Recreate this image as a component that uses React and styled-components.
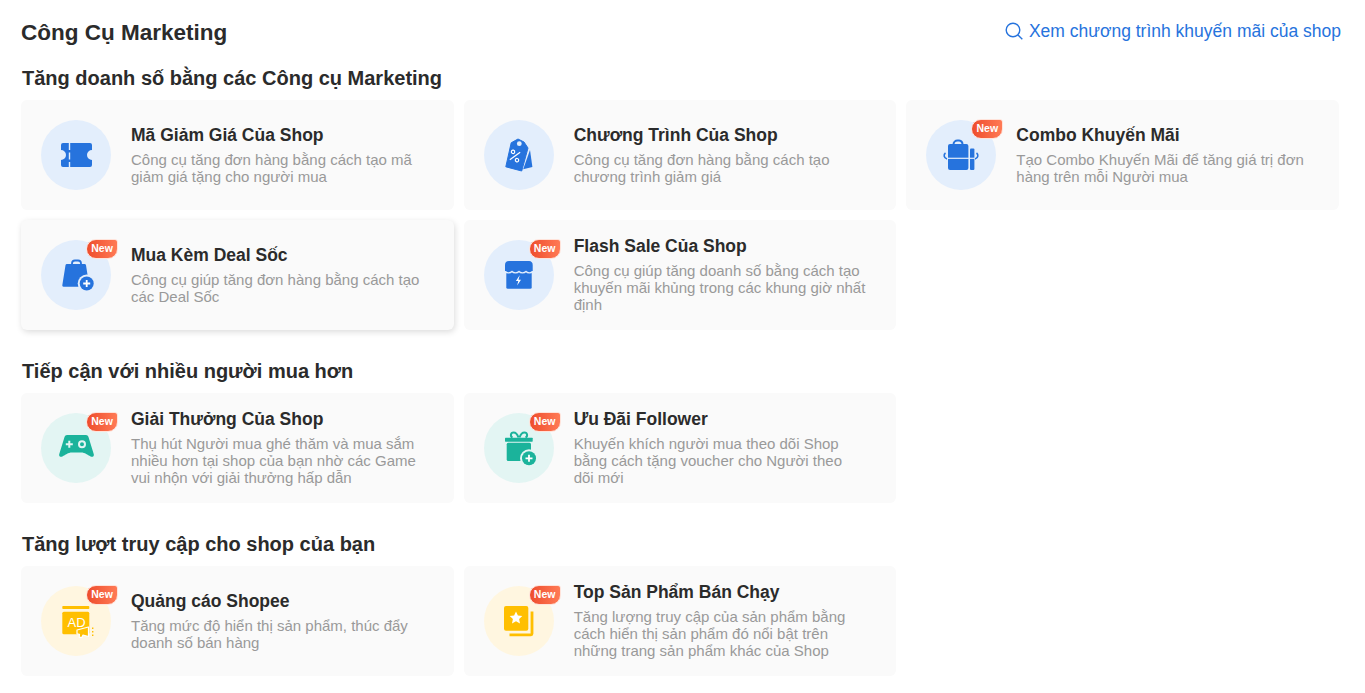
import styled, { createGlobalStyle } from "styled-components";

const GlobalStyle = createGlobalStyle`
  html, body {
    margin: 0;
    padding: 0;
    background: #fff;
    font-family: "Liberation Sans", Arial, sans-serif;
  }
  * {
    box-sizing: border-box;
  }
`;

const palette = {
  blue: { bg: "#e3eefc", fg: "#2673dd" },
  teal: { bg: "#e3f5f3", fg: "#1bb39b" },
  yellow: { bg: "#fff6e0", fg: "#ffbf00" },
};

const Page = styled.div`
  padding: 0 26px 0 21px;
  width: 1365px;
  height: 693px;
  overflow: hidden;
`;

const Header = styled.header`
  display: flex;
  align-items: center;
  justify-content: space-between;
  height: 66px;
  margin-right: -2px;
`;

const PageTitle = styled.h1`
  margin: 0;
  font-size: 22.5px;
  font-weight: 700;
  line-height: 28px;
  color: #2b2b2b;
`;

const ShopLink = styled.a`
  display: flex;
  align-items: center;
  gap: 6px;
  margin-bottom: 4px;
  font-size: 17.5px;
  line-height: 24px;
  color: #2673dd;
  cursor: pointer;
`;

const Section = styled.section`
  & + & {
    margin-top: 29px;
  }
`;

const SectionTitle = styled.h2`
  margin: 0 0 10px 1px;
  font-size: 20px;
  font-weight: 700;
  line-height: 24px;
  color: #2b2b2b;
`;

const Grid = styled.div`
  display: grid;
  grid-template-columns: repeat(3, 1fr);
  gap: 10px;
`;

const Card = styled.div`
  display: flex;
  align-items: center;
  height: 110px;
  padding: 0 30.5px 0 20px;
  background: #fafafa;
  border-radius: 6px;
  cursor: pointer;
  box-shadow: ${(p) => (p.$hover ? "1px 2px 6px rgba(0, 0, 0, 0.14)" : "none")};
`;

const IconCircle = styled.div`
  position: relative;
  flex: none;
  width: 70px;
  height: 70px;
  margin-right: 20px;
  border-radius: 50%;
  background: ${(p) => palette[p.$tone].bg};
  color: ${(p) => palette[p.$tone].fg};

  svg {
    display: block;
  }
`;

const NewBadge = styled.span`
  position: absolute;
  top: -1px;
  left: 45px;
  width: 32px;
  height: 20px;
  border: 1px solid #ffe3da;
  border-radius: 10px 3px 10px 10px;
  background: linear-gradient(90deg, #ee4d2d, #ff7a55);
  color: #fff;
  font-size: 10.5px;
  font-weight: 700;
  line-height: 17px;
  text-align: center;
`;

const CardBody = styled.div`
  min-width: 0;
  margin-bottom: 3px;
`;

const CardTitle = styled.div`
  font-size: 17.5px;
  font-weight: 700;
  line-height: 24px;
  color: #2b2b2b;
`;

const CardDesc = styled.div`
  margin-top: 4px;
  font-size: 15px;
  line-height: 17px;
  color: #999;
`;

const Glyph = ({ children }) => (
  <svg width="70" height="70" viewBox="0 0 70 70" fill="currentColor">
    {children}
  </svg>
);

const PlusDot = ({ cx, cy, ring }) => (
  <>
    <circle cx={cx} cy={cy} r="9" fill={ring} />
    <circle cx={cx} cy={cy} r="7" fill="currentColor" />
    <path d={`M${cx - 3.5} ${cy}h7M${cx} ${cy - 3.5}v7`} stroke="#fff" strokeWidth="1.8" />
  </>
);

const TicketIcon = () => (
  <Glyph>
    <path d="M22 23h27a2 2 0 0 1 2 2v5a5 5 0 0 0 0 10v5a2 2 0 0 1-2 2H22a2 2 0 0 1-2-2v-5a5 5 0 0 0 0-10v-5a2 2 0 0 1 2-2z" />
    <path d="M28.5 23v24" stroke="#e3eefc" strokeWidth="1.4" strokeDasharray="7 2.5" />
  </Glyph>
);

const TagIcon = () => (
  <Glyph>
    <path d="M46 30l2.4 17-9.2 2.2z" />
    <path d="M34 19l6 3 4 6-6.3 23-15.9-4.2 5.4-24z" strokeLinejoin="round" stroke="currentColor" strokeWidth="1" />
    <circle cx="35.3" cy="23.7" r="2.4" fill="#e3eefc" />
    <g transform="rotate(15 31 36)" stroke="#fff" strokeWidth="1.2" fill="none">
      <path d="M35 31l-8 10" />
      <circle cx="28" cy="32.5" r="1.7" />
      <circle cx="34" cy="39.5" r="1.7" />
    </g>
  </Glyph>
);

const ComboIcon = () => (
  <Glyph>
    <path d="M27.5 25v-.5a4 4 0 0 1 4-4h1.500a4 4 0 0 1 3.500 4v.5" fill="none" stroke="currentColor" strokeWidth="2" />
    <rect x="22" y="24" width="20.4" height="26" rx="2" />
    <rect x="44" y="28.4" width="4.4" height="21.6" rx="1" />
    <path d="M21 38.3h28" stroke="#e3eefc" strokeWidth="1.2" />
    <path d="M19.5 33c-2 1.5-2 5 1.5 6M50.5 33c2 1.5 2 5-1.5 6" fill="none" stroke="currentColor" strokeWidth="1.6" />
  </Glyph>
);

const DealIcon = () => (
  <Glyph>
    <path d="M31 25v-1.500a3 3 0 0 1 3-3h3a3 3 0 0 1 3 3V25" fill="none" stroke="currentColor" strokeWidth="1.8" />
    <path d="M26 24h17.500a1.500 1.500 0 0 1 1.500 1.300l3.200 20a1.200 1.200 0 0 1-1.200 1.400H22.500a1.200 1.200 0 0 1-1.200-1.400l3.200-20a1.500 1.500 0 0 1 1.500-1.300z" />
    <PlusDot cx={45.7} cy={43.5} ring="#e3eefc" />
  </Glyph>
);

const StoreIcon = () => (
  <Glyph>
    <rect x="22.3" y="28" width="25.4" height="20.7" rx="1.5" />
    <path d="M25 21h20a4 4 0 0 1 3.700 4v6H21v-6a4 4 0 0 1 4-4z" />
    <path d="M21 31.500c1.700 1.800 5.200 1.800 7 0 1.700 1.800 5.200 1.800 7 0 1.700 1.800 5.200 1.800 7 0 1.700 1.800 5 1.800 6.700 0" fill="none" stroke="#e3eefc" strokeWidth="1.300" />
    <path d="M35.500 35.500l-3.600 5.500h2.400l-1.200 4.600 3.900-5.900h-2.500l1.200-4.200z" fill="#fff" />
  </Glyph>
);

const GamepadIcon = () => (
  <Glyph>
    <path d="M26 22h19a2.500 2.500 0 0 1 2.400 1.800l5.400 17.400c.6 2-1.400 3.200-3.200 2.400-3.200-1.600-5.400-4-9.600-4h-9c-4.200 0-6.400 2.400-9.600 4-1.800.8-3.800-.4-3.200-2.400l5.400-17.400A2.500 2.500 0 0 1 26 22z" />
    <path d="M24.800 31.300h7M28.300 27.800v7" stroke="#e3f5f3" strokeWidth="2" />
    <circle cx="41" cy="31.300" r="3" fill="none" stroke="#e3f5f3" strokeWidth="2" />
  </Glyph>
);

const GiftIcon = () => (
  <Glyph>
    <path d="M34.500 24.500c-1-3-3-5-5-5-3 0-3.500 4-1 5M35.500 24.500c1-3 3-5 5-5 3 0 3.500 4 1 5" fill="none" stroke="currentColor" strokeWidth="2" />
    <rect x="21" y="24.700" width="27.700" height="4" rx=".6" />
    <rect x="22.700" y="29.800" width="24.300" height="18.300" rx="1.500" />
    <PlusDot cx={45} cy={45.300} ring="#e3f5f3" />
  </Glyph>
);

const AdIcon = () => (
  <Glyph>
    <rect x="21.300" y="20" width="27" height="3" rx=".8" />
    <rect x="21.300" y="25.700" width="27" height="22.500" rx="1.500" />
    <text x="26.500" y="40.700" fontFamily="'Liberation Sans', sans-serif" fontSize="13" fill="#fff">AD</text>
    <path d="M36 44l11.500-3v9.500l-5.500-1.500-1 2.300h-2.800l.3-3-2.500-.5z" stroke="#fff" strokeWidth="1.200" strokeLinejoin="round" />
    <path d="M51.700 41.500v1.500M51.700 45v1.500M51.700 48.500V50" stroke="currentColor" strokeWidth="1.400" />
  </Glyph>
);

const TopIcon = () => (
  <Glyph>
    <path d="M48 25.500v22.300a1 1 0 0 1-1 1H25.500" fill="none" stroke="currentColor" strokeWidth="2.800" />
    <rect x="20" y="20" width="24.300" height="24.700" rx="2" />
    <path d="M32 25.500l1.900 4 4.400.5-3.200 3 .9 4.400-4-2.200-4 2.200.9-4.400-3.200-3 4.400-.5z" fill="#fff" />
  </Glyph>
);

const SearchIcon = () => (
  <svg width="18" height="18" viewBox="0 0 18 18" fill="none" stroke="currentColor" strokeWidth="1.400">
    <circle cx="8" cy="8" r="6.800" />
    <path d="M13 13l4.300 4.300" />
  </svg>
);

const sections = [
  {
    title: "Tăng doanh số bằng các Công cụ Marketing",
    tools: [
      { name: "Mã Giảm Giá Của Shop", desc: "Công cụ tăng đơn hàng bằng cách tạo mã giảm giá tặng cho người mua", tone: "blue", Icon: TicketIcon },
      { name: "Chương Trình Của Shop", desc: "Công cụ tăng đơn hàng bằng cách tạo chương trình giảm giá", tone: "blue", Icon: TagIcon },
      { name: "Combo Khuyến Mãi", desc: "Tạo Combo Khuyến Mãi để tăng giá trị đơn hàng trên mỗi Người mua", tone: "blue", Icon: ComboIcon, isNew: true },
      { name: "Mua Kèm Deal Sốc", desc: "Công cụ giúp tăng đơn hàng bằng cách tạo các Deal Sốc", tone: "blue", Icon: DealIcon, isNew: true, hover: true },
      { name: "Flash Sale Của Shop", desc: "Công cụ giúp tăng doanh số bằng cách tạo khuyến mãi khủng trong các khung giờ nhất định", tone: "blue", Icon: StoreIcon, isNew: true },
    ],
  },
  {
    title: "Tiếp cận với nhiều người mua hơn",
    tools: [
      { name: "Giải Thưởng Của Shop", desc: "Thụ hút Người mua ghé thăm và mua sắm nhiều hơn tại shop của bạn nhờ các Game vui nhộn với giải thưởng hấp dẫn", tone: "teal", Icon: GamepadIcon, isNew: true },
      { name: "Ưu Đãi Follower", desc: "Khuyến khích người mua theo dõi Shop bằng cách tặng voucher cho Người theo dõi mới", tone: "teal", Icon: GiftIcon, isNew: true },
    ],
  },
  {
    title: "Tăng lượt truy cập cho shop của bạn",
    tools: [
      { name: "Quảng cáo Shopee", desc: "Tăng mức độ hiển thị sản phẩm, thúc đẩy doanh số bán hàng", tone: "yellow", Icon: AdIcon, isNew: true },
      { name: "Top Sản Phẩm Bán Chạy", desc: "Tăng lượng truy cập của sản phẩm bằng cách hiển thị sản phẩm đó nổi bật trên những trang sản phẩm khác của Shop", tone: "yellow", Icon: TopIcon, isNew: true },
    ],
  },
];

const App = () => (
  <Page>
    <GlobalStyle />
    <Header>
      <PageTitle>Công Cụ Marketing</PageTitle>
      <ShopLink>
        <SearchIcon />
        Xem chương trình khuyến mãi của shop
      </ShopLink>
    </Header>
    {sections.map((section) => (
      <Section key={section.title}>
        <SectionTitle>{section.title}</SectionTitle>
        <Grid>
          {section.tools.map(({ name, desc, tone, Icon, isNew, hover }) => (
            <Card key={name} $hover={hover}>
              <IconCircle $tone={tone}>
                <Icon />
                {isNew && <NewBadge>New</NewBadge>}
              </IconCircle>
              <CardBody>
                <CardTitle>{name}</CardTitle>
                <CardDesc>{desc}</CardDesc>
              </CardBody>
            </Card>
          ))}
        </Grid>
      </Section>
    ))}
  </Page>
);

export default App;
